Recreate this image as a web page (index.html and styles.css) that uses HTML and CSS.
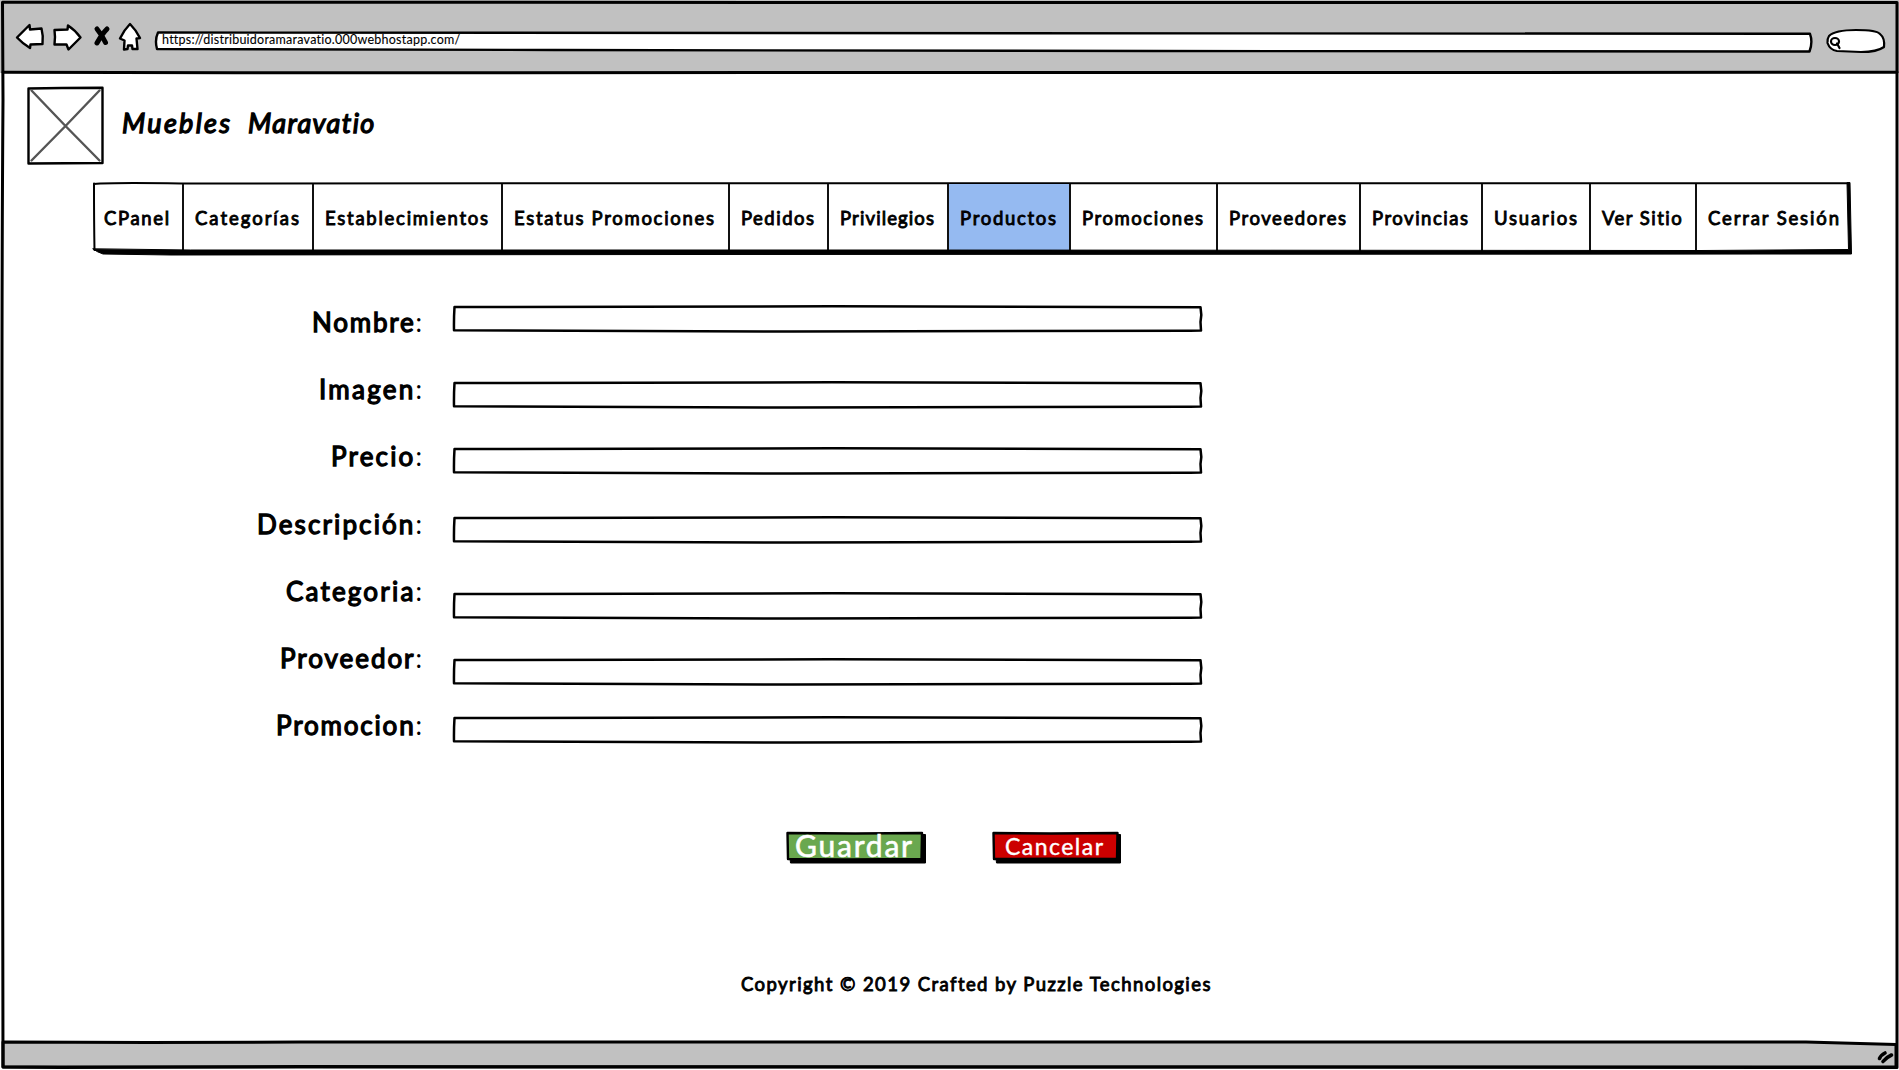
FILE: index.html
```html
<!DOCTYPE html>
<html lang="es">
<head>
<meta charset="utf-8">
<title>Muebles Maravatio</title>
<link rel="stylesheet" href="styles.css">
</head>
<body>
<svg class="defs" width="0" height="0">
  <symbol id="field" viewBox="0 0 754 30">
    <path d="M2.500 3C150 2.800 270 2.300 380 2.300S600 3.600 748.500 3.200L749.300 11 748.500 18 749 26.600C600 27 450 27.600 340 27.500S120 26.400 2 26.200Q1.800 14 2.500 3Z"/>
  </symbol>
</svg>
<div class="window">
  <header class="toolbar">
    <svg class="nav-icons" width="150" height="73" viewBox="0 0 150 73">
      <path d="M17 37.500L29.500 25 30 29.500 41.500 28.500Q43.500 36 42.500 44L30.500 44.500 30 48 Q22 43 17 37.500Z"/>
      <path d="M54.500 30L67.500 29.500 68 25.500Q75 30 80.500 37.500L68.500 49.500 66.500 44.500 54.500 44.500Q55.500 37 54.500 30Z"/>
      <path class="cross" d="M97 29Q102 35 105.500 42.500M107 29Q102 34 97 43"/>
      <path d="M130 24Q136 30 140 38L136.500 38.500 137.500 49 132.500 49 132 45.500 128 45.500 127.500 49 124 49.500 124.500 40.500 120 38.500Q124 30 130 24Z"/>
    </svg>
    <div class="address">
      <svg class="outline" width="1662" height="24" viewBox="0 0 1662 24"><path d="M4 2.500C300 1.500 900 2 1656 3.800Q1659 12 1655.500 21.500L1000 21 400 20 3 19Q.5 10 4 2.500Z"/></svg>
      <span class="fit url" data-width="298">https://distribuidoramaravatio.000webhostapp.com/</span>
    </div>
    <svg class="search" width="62" height="27" viewBox="0 0 62 27">
      <path d="M4 8Q10 2 31 2T55 6Q60 10 59 19Q52 24 36 24L12 23Q5 22 2.500 15Q2 11 4 8Z"/>
      <ellipse cx="10" cy="13.500" rx="4" ry="3.500"/><path d="M12 15.500L14.500 20"/>
    </svg>
  </header>

  <main class="page">
    <div class="brand">
      <svg class="logo" width="78" height="80" viewBox="0 0 78 80">
        <path d="M2.500 2.500L36 2 76.500 1.800 76.500 77 40 77.300 2.500 77.500Z"/>
        <path class="diagonal" d="M5.500 4.500L39.500 40 73.500 74.500M73.500 4.500L39.500 40 5.500 74.500"/>
      </svg>
      <h1><span class="fit" data-width="108">Muebles</span><span class="fit" data-width="126">Maravatio</span></h1>
    </div>

    <nav class="menu">
      <svg class="outline" width="1762" height="76" viewBox="0 0 1762 76">
        <path class="fine" d="M3 3Q20 1.500 90 2.500L700 2.200 1758 2.200M3 2.500Q3 40 3.500 69"/>
      </svg>
      <svg class="outline ledge" width="1762" height="76" viewBox="0 0 1762 76">
        <path class="heavy" d="M2 68Q6 71 12 73L80 74 600 73.500 1760.500 73 1760 50 1759 1.500 1756 1.500 1757.500 68.500 1610 69.500 800 69 100 69Z"/>
      </svg>
      <a class="c1"><span class="fit" data-width="65">CPanel</span></a>
      <a class="c2"><span class="fit" data-width="104">Categorías</span></a>
      <a class="c3"><span class="fit" data-width="163">Establecimientos</span></a>
      <a class="c4"><span class="fit" data-width="200">Estatus Promociones</span></a>
      <a class="c5"><span class="fit" data-width="73">Pedidos</span></a>
      <a class="c6"><span class="fit" data-width="94">Privilegios</span></a>
      <a class="c7 active"><span class="fit" data-width="96">Productos</span></a>
      <a class="c8"><span class="fit" data-width="121">Promociones</span></a>
      <a class="c9"><span class="fit" data-width="117">Proveedores</span></a>
      <a class="c10"><span class="fit" data-width="96">Provincias</span></a>
      <a class="c11"><span class="fit" data-width="83">Usuarios</span></a>
      <a class="c12"><span class="fit" data-width="80">Ver Sitio</span></a>
      <a class="c13"><span class="fit" data-width="131">Cerrar Sesión</span></a>
    </nav>

    <form class="form">
      <div class="labels">
        <label><span class="fit" data-width="110">Nombre<i>:</i></span></label>
        <label><span class="fit" data-width="103">Imagen<i>:</i></span></label>
        <label><span class="fit" data-width="91">Precio<i>:</i></span></label>
        <label><span class="fit" data-width="165">Descripción<i>:</i></span></label>
        <label><span class="fit" data-width="136">Categoria<i>:</i></span></label>
        <label><span class="fit" data-width="142">Proveedor<i>:</i></span></label>
        <label><span class="fit" data-width="146">Promocion<i>:</i></span></label>
      </div>
      <div class="fields">
        <svg class="field"><use href="#field"/></svg>
        <svg class="field gap-wide"><use href="#field"/></svg>
        <svg class="field gap-mid"><use href="#field"/></svg>
        <svg class="field gap-loose"><use href="#field"/></svg>
        <svg class="field gap-wide"><use href="#field"/></svg>
        <svg class="field gap-mid"><use href="#field"/></svg>
        <svg class="field gap-tight"><use href="#field"/></svg>
      </div>
    </form>

    <div class="actions">
      <div class="button save">
        <svg class="outline" width="142" height="34" viewBox="0 0 142 34"><path class="shadow" d="M5 27L5.500 32 140.500 32 140.500 3.500 136 3.500Z"/><path class="face" d="M2.500 2L70 2.500 137 2 136.500 28 60 28.500 3 28Z"/></svg>
        <span class="fit" data-width="117">Guardar</span>
      </div>
      <div class="button cancel">
        <svg class="outline" width="130" height="34" viewBox="0 0 130 34"><path class="shadow" d="M5 27L5.500 32 129.500 32 129.500 3.500 124 3.500Z"/><path class="face" d="M2.500 2L60 2.500 126.500 2 126 28 60 27.800 3 28Z"/></svg>
        <span class="fit" data-width="98">Cancelar</span>
      </div>
    </div>
    <p class="copyright"><span class="fit" data-width="469">Copyright © 2019 Crafted by Puzzle Technologies</span></p>
  </main>

  <footer class="statusbar"></footer>
  <svg class="frame" width="1899" height="1070" viewBox="0 0 1899 1070">
    <path class="status-fill" d="M3 1042L148 1042.500 300 1042 1806 1042 1896 1044.500 1896 1067 3 1067Z"/>
    <path d="M2.500 2.300L1897 2.500Q1896.500 500 1897 1067.500L300 1066.500 60 1067.500 3 1067Q3 900 2.200 600 1.500 300 3 100Z"/>
    <path d="M3 72.200L236 72.700 1500 72.500 1897 72.200"/>
    <path class="grip" d="M1879.500 1058.500Q1881 1055 1885 1053M1883 1061.500Q1886 1057.500 1891.500 1055"/>
  </svg>
</div>
<script src="fit.js"></script>
</body>
</html>
```
FILE: styles.css
```css
* { box-sizing: border-box; }
body { margin: 0; background: #fff; color: #000; font-family: Lato, "Open Sans", sans-serif; overflow: hidden; }
svg { display: block; overflow: visible; fill: #fff; stroke: #000; stroke-width: 2.4; stroke-linejoin: round; stroke-linecap: round; flex: none; }
.defs { position: absolute; }
.window { position: relative; z-index: 0; width: 1899px; height: 1070px; display: flex; flex-direction: column; }
.fit { display: inline-block; white-space: pre; }
.outline { position: absolute; inset: 0; z-index: -1; }

.toolbar { position: relative; z-index: -2; height: 73px; flex: none; background: #c1c1c1; display: flex; align-items: flex-start; }
.nav-icons .cross { stroke-width: 5; }
.address { position: relative; z-index: 0; width: 1662px; height: 24px; margin: 30px 0 0 4px; padding-left: 8px; flex: none; line-height: 19px; font-size: 12.5px; -webkit-text-stroke: .1px #000; }
.search { margin: 28px 0 0 9px; stroke-width: 2.2; }

.page { flex: 1; display: flex; flex-direction: column; align-items: flex-start; }
.brand { display: flex; align-items: center; margin: 13px 0 0 26px; height: 80px; }
h1 { margin: 0 0 6px 18px; display: flex; gap: 18px; font-size: 27px; line-height: 34px; font-weight: 400; font-style: italic; -webkit-text-stroke: 1.3px #000; }
.logo .diagonal { stroke: #555; stroke-width: 2.4; }

.menu { position: relative; z-index: 0; display: flex; width: 1762px; height: 76px; margin: 15px 0 0 91px; padding: 3px 2px 5px; font-size: 18.5px; -webkit-text-stroke: .9px #000; }
.menu a { display: flex; align-items: center; padding-left: 11px; border-right: 2px solid #111; flex: none; line-height: 24px; }
.menu a.active { background: #95baf1; }
.menu a:last-of-type { border-right: 0; }
.menu .fine { fill: none; stroke-width: 2; }
.menu .ledge { z-index: 1; }
.menu .heavy { fill: #000; stroke-width: 1; }
.c1 { width: 91px; } .c2 { width: 130px; } .c3 { width: 189px; } .c4 { width: 227px; } .c5 { width: 99px; }
.c6 { width: 120px; } .c7 { width: 122px; } .c8 { width: 147px; } .c9 { width: 143px; } .c10 { width: 122px; }
.c11 { width: 108px; } .c12 { width: 106px; } .c13 { width: 154px; }

.form { display: flex; margin-top: 45px; height: 440px; align-items: flex-start; }
.labels { width: 422px; display: flex; flex-direction: column; align-items: flex-end; gap: 27.2px; font-size: 26px; line-height: 40px; -webkit-text-stroke: 1.3px #000; }
.labels label { display: block; height: 40px; }
.labels i { font-style: normal; -webkit-text-stroke: 0; }
.fields { display: flex; flex-direction: column; margin-left: 30px; padding-top: 2px; }
.field { width: 754px; height: 30px; stroke-width: 2.5; }
.gap-wide { margin-top: 46px; }
.gap-mid { margin-top: 36px; }
.gap-loose { margin-top: 39px; }
.gap-tight { margin-top: 28px; }

.actions { display: flex; gap: 64px; margin: 89px 0 0 785px; height: 34px; color: #fff; }
.button { position: relative; z-index: 0; }
.save { width: 142px; padding-left: 10px; font-size: 30px; line-height: 28px; -webkit-text-stroke: .6px #fff; }
.cancel { width: 130px; padding-left: 14px; font-size: 23px; line-height: 30px; -webkit-text-stroke: .4px #fff; }
.save .face { fill: #6aa84f; }
.cancel .face { fill: #cc0000; }
.shadow { fill: #000; stroke-width: 1; }
.copyright { margin: 107px 0 0 741px; font-size: 18.5px; line-height: 24px; -webkit-text-stroke: .9px #000; }

.statusbar { height: 28px; flex: none; }
.frame { position: absolute; inset: 0; z-index: -1; fill: none; stroke-width: 3; }
.frame .status-fill { fill: #c1c1c1; }
.frame .grip { stroke-width: 3.6; }
```
FILE: fit.js
```js
// Spreads the letters of each caption evenly over its data-width.
document.querySelectorAll('.fit').forEach(function (el) {
  var target = Number(el.dataset.width);
  var natural = el.getBoundingClientRect().width;
  el.style.letterSpacing = (target - natural) / (el.textContent.length - 1) + 'px';
  el.style.width = target + 'px';
});
```
